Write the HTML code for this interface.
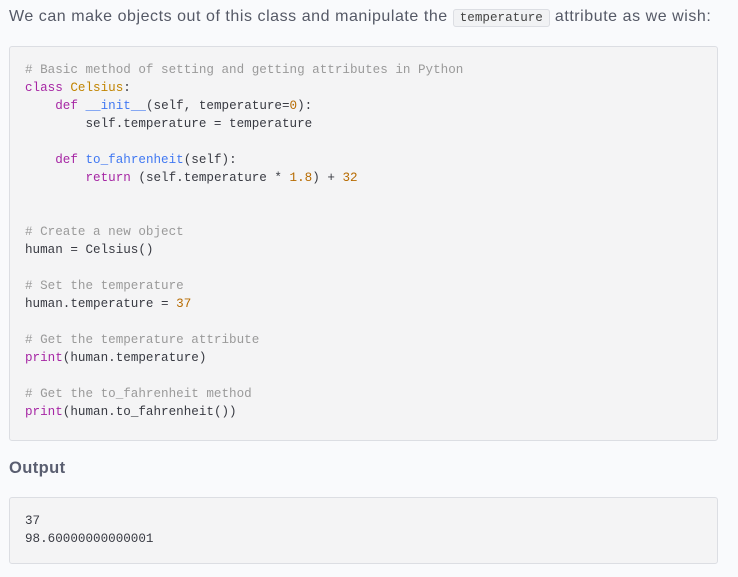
<!DOCTYPE html>
<html><head><meta charset="utf-8"><style>
body{margin:0;background:#f9fafc;width:738px;height:577px;overflow:hidden;font-family:"Liberation Sans",sans-serif;}
.p{position:absolute;left:9px;top:8px;font-size:16px;color:#555966;white-space:nowrap;letter-spacing:0.55px}
.ic{font-family:"Liberation Mono",monospace;font-size:12.6px;letter-spacing:0;background:#f1f2f4;border:1px solid #dcdee3;border-radius:3px;padding:1px 6px;color:#444;}
.box{position:absolute;left:9px;width:707px;background:#f4f4f5;border:1px solid #dcdee3;border-radius:3px;}
pre{margin:0;position:absolute;left:15px;font-family:"Liberation Mono",monospace;font-size:12.6px;line-height:18px;color:#383a42;}
.c{color:#9a9a9a}.k{color:#a626a4}.t{color:#c18401}.f{color:#4078f2}.n{color:#b76b01}
.h{position:absolute;left:9px;top:459px;font-weight:bold;font-size:16.5px;letter-spacing:0.4px;color:#5a5e70}
</style></head><body>
<div class="p">We can make objects out of this class and manipulate the <span class="ic">temperature</span> attribute as we wish:</div>
<div class="box" style="top:46px;height:393px"><pre style="top:14px"><span class="c"># Basic method of setting and getting attributes in Python</span>
<span class="k">class</span> <span class="t">Celsius</span>:
    <span class="k">def</span> <span class="f">__init__</span>(self, temperature=<span class="n">0</span>):
        self.temperature = temperature

    <span class="k">def</span> <span class="f">to_fahrenheit</span>(self):
        <span class="k">return</span> (self.temperature * <span class="n">1.8</span>) + <span class="n">32</span>


<span class="c"># Create a new object</span>
human = Celsius()

<span class="c"># Set the temperature</span>
human.temperature = <span class="n">37</span>

<span class="c"># Get the temperature attribute</span>
<span class="k">print</span>(human.temperature)

<span class="c"># Get the to_fahrenheit method</span>
<span class="k">print</span>(human.to_fahrenheit())</pre></div>
<div class="h">Output</div>
<div class="box" style="top:497px;height:65px"><pre style="top:14px">37
98.60000000000001</pre></div>
</body></html>
